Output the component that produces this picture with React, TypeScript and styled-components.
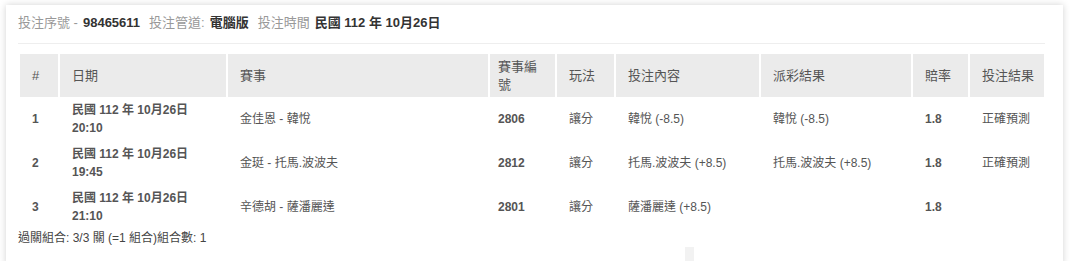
import styled, {createGlobalStyle} from "styled-components";

const GlobalStyle = createGlobalStyle`
  html, body {
    margin: 0;
    padding: 0;
    background: #fff;
  }
  body {
    font-family: "Liberation Sans", "Noto Sans CJK TC", sans-serif;
    color: #555;
  }
`;

const Card = styled.div`
  margin: 5px 17px 0 6px;
  padding: 8px 12px 0 12px;
  background: #fff;
  box-shadow: 0 0 7px rgba(0, 0, 0, 0.18);
  height: 260px;
  box-sizing: border-box;
`;

const InfoBar = styled.div`
  font-size: 13px;
  line-height: 20px;
  color: #333;
  padding-bottom: 10px;
  border-bottom: 1px solid #eeeeee;
  width: 1027px;
`;

const Label = styled.span`
  color: #999;
  margin-left: ${props => (props.$first ? "0" : "9px")};
  margin-right: 5px;
`;

const Value = styled.span`
  font-weight: bold;
  color: #333;
`;

const Table = styled.table`
  margin-top: 10px;
  border-collapse: separate;
  border-spacing: 2px 0;
  table-layout: fixed;
  width: 1026px;
  font-size: 12px;
`;

const Th = styled.th`
  background: #ebebeb;
  color: #555;
  font-size: 13px;
  font-weight: normal;
  text-align: left;
  padding: ${props => (props.$tight ? "0 8px" : "0 6px 0 12px")};
  height: 43px;
  line-height: 18px;
  vertical-align: middle;
`;

const Td = styled.td`
  padding: 0 ${props => (props.$tight ? "8px" : "12px")};
  height: 44px;
  line-height: 18px;
  vertical-align: middle;
  color: #555;
  font-weight: ${props => (props.$bold ? "bold" : "normal")};
`;

const Footer = styled.div`
  font-size: 12px;
  line-height: 18px;
  color: #444;
`;

const Handle = styled.div`
  width: 9px;
  height: 17px;
  margin: 0 0 0 667px;
  background: #f2f2f2;
`;

interface Bet {
    no: number;
    date: string;
    time: string;
    match: string;
    code: string;
    play: string;
    pick: string;
    payout: string;
    odds: string;
    result: string;
}

const bets: Bet[] = [
    {no: 1, date: "民國 112 年 10月26日", time: "20:10", match: "金佳恩 - 韓悅", code: "2806", play: "讓分", pick: "韓悅 (-8.5)", payout: "韓悅 (-8.5)", odds: "1.8", result: "正確預測"},
    {no: 2, date: "民國 112 年 10月26日", time: "19:45", match: "金珽 - 托馬.波波夫", code: "2812", play: "讓分", pick: "托馬.波波夫 (+8.5)", payout: "托馬.波波夫 (+8.5)", odds: "1.8", result: "正確預測"},
    {no: 3, date: "民國 112 年 10月26日", time: "21:10", match: "辛德胡 - 薩潘麗達", code: "2801", play: "讓分", pick: "薩潘麗達 (+8.5)", payout: "", odds: "1.8", result: ""},
];

const widths = [38, 166, 260, 65, 57, 143, 150, 55, 74];

function App() {
    return (
        <>
            <GlobalStyle/>
            <Card>
                <InfoBar>
                    <Label $first>投注序號 -</Label>
                    <Value>98465611</Value>
                    <Label>投注管道:</Label>
                    <Value>電腦版</Value>
                    <Label>投注時間</Label>
                    <Value>民國 112 年 10月26日</Value>
                </InfoBar>
                <Table>
                    <colgroup>
                        {widths.map((w, i) => <col key={i} style={{width: w}}/>)}
                    </colgroup>
                    <thead>
                    <tr>
                        <Th>#</Th>
                        <Th>日期</Th>
                        <Th>賽事</Th>
                        <Th $tight>賽事編號</Th>
                        <Th>玩法</Th>
                        <Th>投注內容</Th>
                        <Th>派彩結果</Th>
                        <Th>賠率</Th>
                        <Th>投注結果</Th>
                    </tr>
                    </thead>
                    <tbody>
                    {
                        bets.map(bet => (
                            <tr key={bet.no}>
                                <Td $bold>{bet.no}</Td>
                                <Td $bold>{bet.date}<br/>{bet.time}</Td>
                                <Td>{bet.match}</Td>
                                <Td $bold $tight>{bet.code}</Td>
                                <Td>{bet.play}</Td>
                                <Td>{bet.pick}</Td>
                                <Td>{bet.payout}</Td>
                                <Td $bold>{bet.odds}</Td>
                                <Td>{bet.result}</Td>
                            </tr>
                        ))
                    }
                    </tbody>
                </Table>
                <Footer>過關組合: 3/3 關 (=1 組合)組合數: 1</Footer>
                <Handle/>
            </Card>
        </>
    );
}

export default App;
